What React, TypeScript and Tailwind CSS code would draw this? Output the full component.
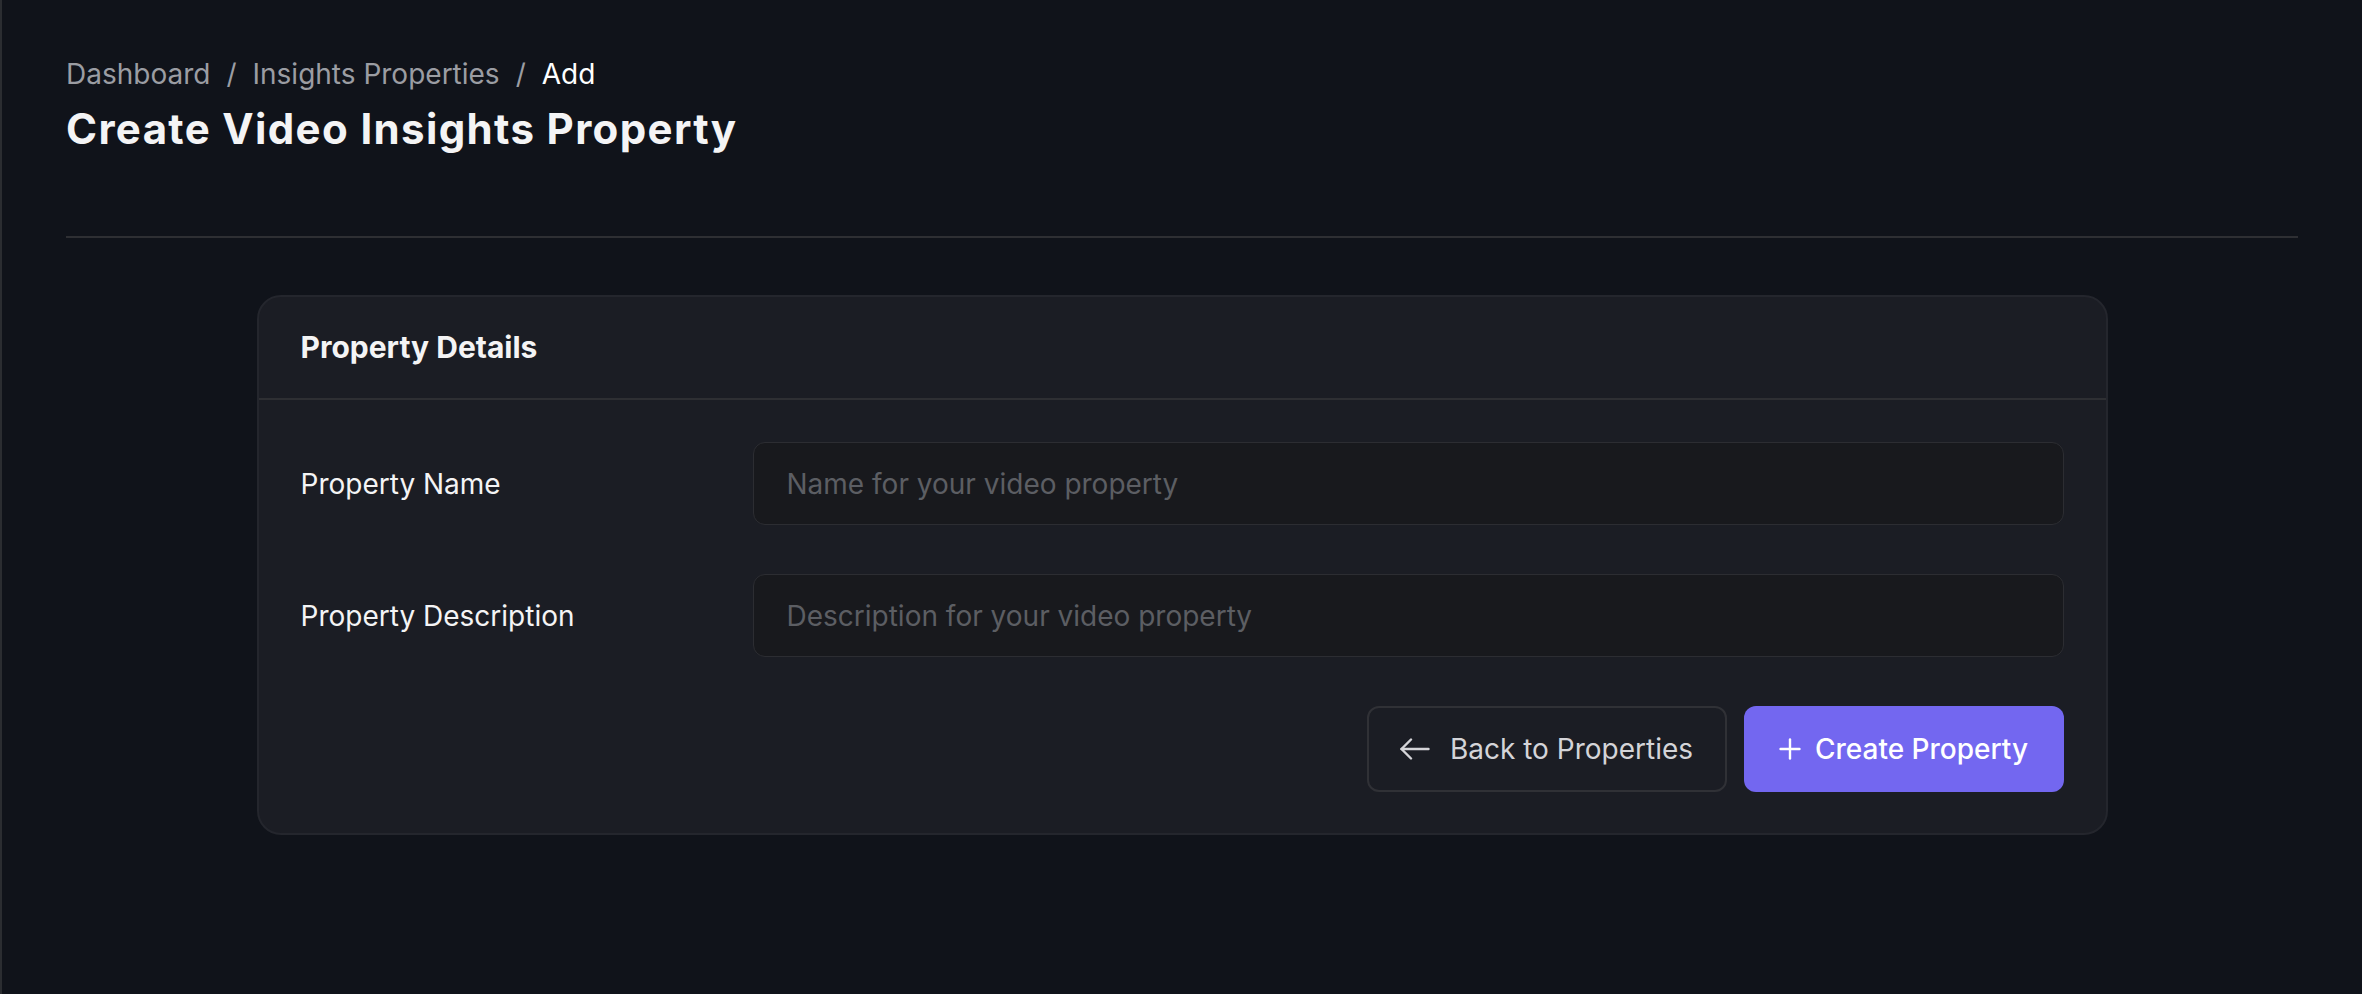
import React from 'react';

const ArrowLeftIcon = () => (
  <svg width="30" height="22" viewBox="0 0 30 22" fill="none" stroke="currentColor" strokeWidth="2.4" strokeLinecap="round" strokeLinejoin="round">
    <path d="M11 1.5 L1.5 11 L11 20.5" />
    <path d="M1.5 11 H28.5" />
  </svg>
);

const PlusIcon = () => (
  <svg width="22" height="22" viewBox="0 0 22 22" fill="none" stroke="currentColor" strokeWidth="2.4" strokeLinecap="round">
    <path d="M11 1.5 V20.5" />
    <path d="M1.5 11 H20.5" />
  </svg>
);

interface FieldProps {
  label: string;
  placeholder: string;
}

const Field: React.FC<FieldProps> = ({ label, placeholder }) => (
  <div className="flex items-center">
    <label className="w-[452px] shrink-0 text-[28px] text-[#f4f4f5]">{label}</label>
    <input
      type="text"
      placeholder={placeholder}
      className="h-[83px] flex-1 rounded-[12px] border border-[#2c2d32] bg-[#18191d] px-[33px] text-[28px] text-[#f4f4f5] outline-none placeholder:text-[#5c5e63]"
    />
  </div>
);

export default function App() {
  return (
    <div className="min-h-screen border-l-2 border-[#2b2d31] bg-[#10131a] font-['Inter',sans-serif]">
      <div className="px-[64px] pt-[54px] pb-[100px]">
        {/* Breadcrumb */}
        <nav className="flex items-center text-[28px] leading-[40px] text-[#9b9da3]">
          <span>Dashboard</span>
          <span className="mx-[16px]">/</span>
          <span>Insights Properties</span>
          <span className="mx-[16px]">/</span>
          <span className="text-white">Add</span>
        </nav>
        <h1 className="mt-[10px] text-[42px] leading-[50px] font-bold tracking-[1.35px] text-[#f4f4f5]">Create Video Insights Property</h1>

        <div className="mt-[82px] h-[2px] bg-[#2e2f33]" />

        {/* Card */}
        <div className="mx-auto mt-[57px] w-[1851px] rounded-[24px] border-2 border-[#24262d] bg-[#1b1d24]">
          <div className="flex h-[103px] items-center border-b-2 border-[#2e2f33] px-[42px]">
            <h2 className="text-[30px] font-bold text-[#f4f4f5]">Property Details</h2>
          </div>

          <div className="flex flex-col px-[42px] pt-[42px] pb-[41px]">
            <Field label="Property Name" placeholder="Name for your video property" />
            <div className="mt-[49px]">
              <Field label="Property Description" placeholder="Description for your video property" />
            </div>

            <div className="mt-[49px] flex justify-end gap-[17px]">
              <button className="flex h-[86px] w-[360px] items-center justify-center gap-[20px] rounded-[12px] border-2 border-[#303136] bg-[#1b1d24] text-[28px] text-[#d4d4d8]">
                <ArrowLeftIcon />
                Back to Properties
              </button>
              <button className="flex h-[86px] w-[320px] items-center justify-center gap-[14px] rounded-[12px] bg-[#7367f0] text-[28px] font-medium text-white">
                <PlusIcon />
                Create Property
              </button>
            </div>
          </div>
        </div>
      </div>
    </div>
  );
}
